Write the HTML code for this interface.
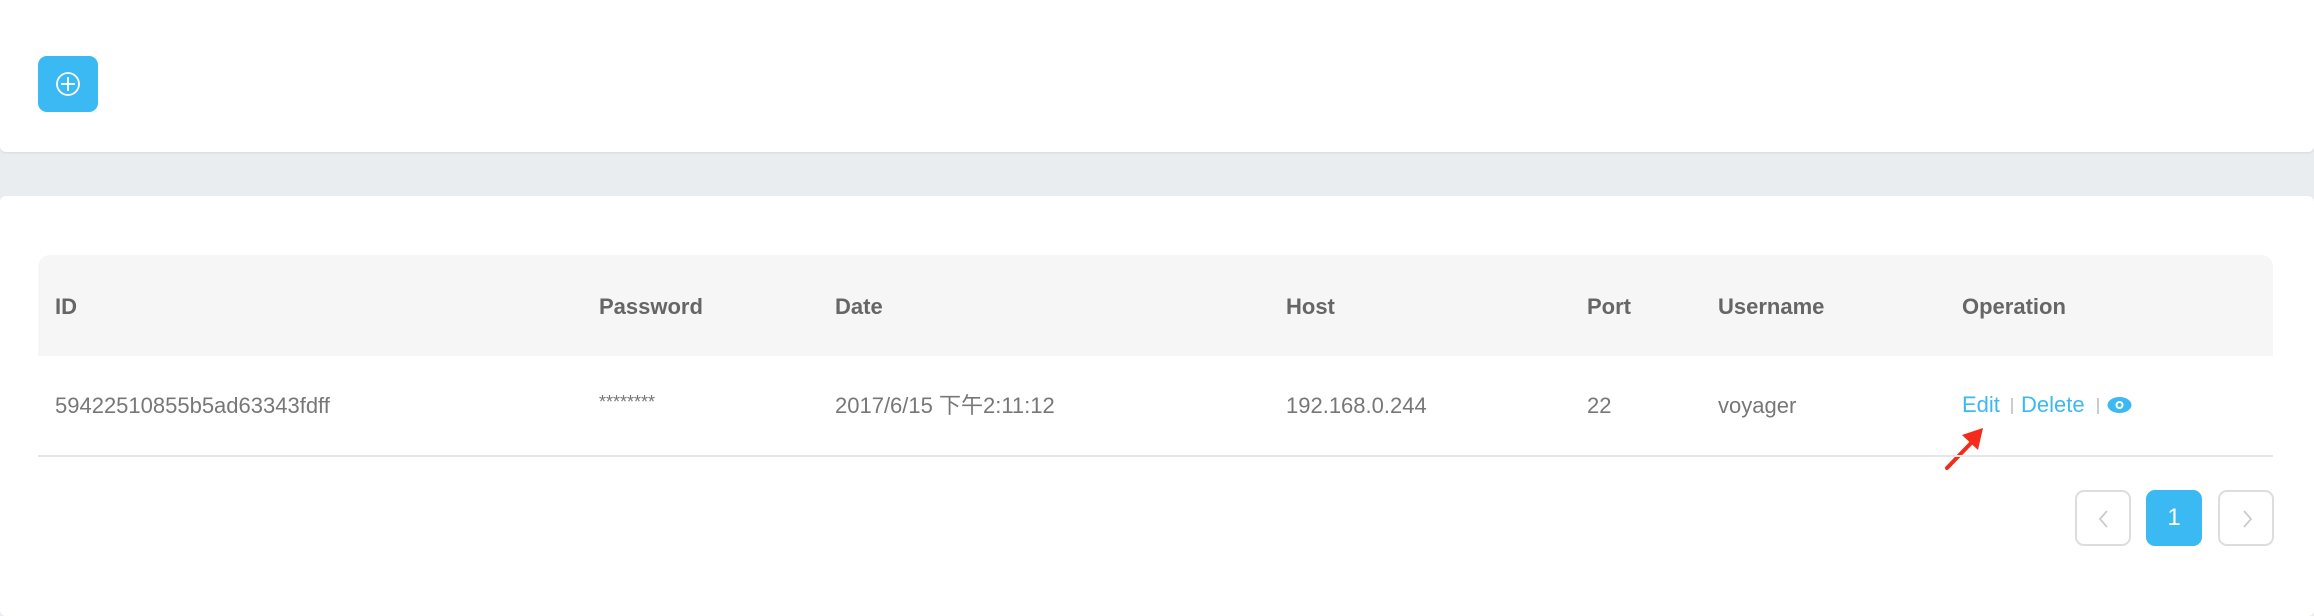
<!DOCTYPE html>
<html><head><meta charset="utf-8"><style>
*{margin:0;padding:0;box-sizing:border-box}
body{width:2314px;height:596px;background:#e9edf0;position:relative;overflow:hidden;font-family:"Liberation Sans","Noto Sans CJK SC",sans-serif}
.card1{position:absolute;left:0;top:0;width:2314px;height:152px;background:#fff;border-radius:0 0 6px 6px;box-shadow:0 1px 2px rgba(0,0,0,.08)}
.card2{position:absolute;left:0;top:196px;width:2314px;height:420px;background:#fff;border-radius:6px}
.btn{position:absolute;left:38px;top:56px;width:60px;height:56px;background:#3bb9f2;border-radius:9px}
.btn svg{position:absolute;left:15px;top:13px}
.thead{position:absolute;left:38px;top:255px;width:2235px;height:101px;background:#f6f6f6;border-radius:12px 12px 0 0}
.h{position:absolute;top:294px;font-size:22px;line-height:1.2;font-weight:bold;color:#666}
.c{position:absolute;top:393px;font-size:22px;line-height:1.2;color:#777;white-space:nowrap}
.line{position:absolute;left:38px;top:455px;width:2235px;height:2px;background:#e6e6e6}
.op{position:absolute;top:392px;font-size:22px;line-height:1.2;color:#3bb9f2}
.sep{position:absolute;top:398px;width:2px;height:16px;background:#ccc}
.pg{position:absolute;top:490px;width:56px;height:56px;border:2px solid #ddd;border-radius:9px;background:#fff}
.pg svg{position:absolute;left:18px;top:17px}
.cur{position:absolute;left:2146px;top:490px;width:56px;height:56px;background:#3bb9f2;border-radius:9px;color:#fff;font-size:24px;text-align:center;line-height:56px}
</style></head><body>
<div class="card1"><div class="btn"><svg width="30" height="30" viewBox="0 0 30 30"><circle cx="15" cy="15" r="11" fill="none" stroke="#fff" stroke-width="1.8"/><path d="M15 8v14M8 15h14" stroke="#fff" stroke-width="1.8"/></svg></div></div>
<div class="card2"></div>
<div class="thead"></div>
<div class="h" style="left:55px">ID</div>
<div class="h" style="left:599px">Password</div>
<div class="h" style="left:835px">Date</div>
<div class="h" style="left:1286px">Host</div>
<div class="h" style="left:1587px">Port</div>
<div class="h" style="left:1718px">Username</div>
<div class="h" style="left:1962px">Operation</div>
<div class="c" style="left:55px">59422510855b5ad63343fdff</div>
<div class="c" style="left:599px;top:392px;font-size:18px">********</div>
<div class="c" style="left:835px">2017/6/15 下午2:11:12</div>
<div class="c" style="left:1286px">192.168.0.244</div>
<div class="c" style="left:1587px">22</div>
<div class="c" style="left:1718px">voyager</div>
<div class="op" style="left:1962px">Edit</div>
<div class="sep" style="left:2011px"></div>
<div class="op" style="left:2021px">Delete</div>
<div class="sep" style="left:2097px"></div>
<svg style="position:absolute;left:2107px;top:396px" width="25" height="18" viewBox="0 0 25 18"><ellipse cx="12.5" cy="9" rx="12" ry="8" fill="#3bb9f2"/><circle cx="12.5" cy="9" r="4" fill="#fff"/><circle cx="12.5" cy="9" r="2" fill="#3bb9f2"/></svg>
<svg style="position:absolute;left:1940px;top:420px" width="50" height="55" viewBox="0 0 50 55"><path d="M7 48L34 20" stroke="#f52a1a" stroke-width="4" stroke-linecap="round"/><path d="M43 8L22 15L38 30Z" fill="#f52a1a"/></svg>
<div class="line"></div>
<div class="pg" style="left:2075px"><svg width="18" height="20" viewBox="0 0 18 20"><path d="M12 2L5 10L12 18" fill="none" stroke="#ccc" stroke-width="1.8"/></svg></div>
<div class="cur">1</div>
<div class="pg" style="left:2218px"><svg width="18" height="20" viewBox="0 0 18 20"><path d="M6 2L13 10L6 18" fill="none" stroke="#ccc" stroke-width="1.8"/></svg></div>
</body></html>
